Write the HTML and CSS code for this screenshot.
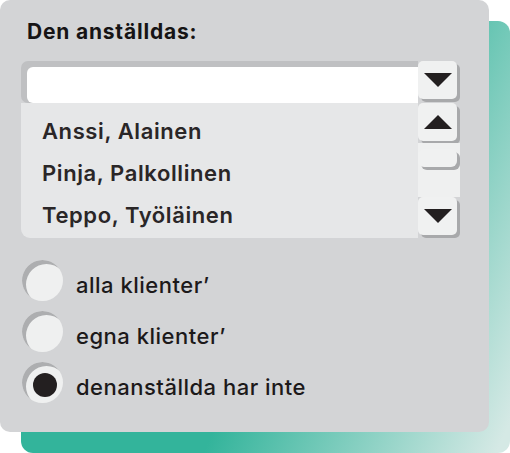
FILE: index.html
```html
<!DOCTYPE html>
<html lang="sv">
<head>
<meta charset="utf-8">
<link rel="stylesheet" href="styles.css">
</head>
<body>
<div class="stage">
  <div class="backdrop"></div>
  <div class="card">
    <div class="title">Den anställdas:</div>
    <div class="combo">
      <div class="input"><div class="field"></div></div>
      <div class="btn btn-top"><span class="tri down"></span></div>
      <div class="list">
        <div class="item">Anssi, Alainen</div>
        <div class="item">Pinja, Palkollinen</div>
        <div class="item">Teppo, Työläinen</div>
      </div>
      <div class="scroll">
        <div class="btn"><span class="tri up"></span></div>
        <div class="track"><div class="thumb"></div></div>
        <div class="btn"><span class="tri down"></span></div>
      </div>
    </div>
    <div class="radios">
      <div class="radio"><span class="circle"></span><span class="label">alla klienter’</span></div>
      <div class="radio"><span class="circle"></span><span class="label">egna klienter’</span></div>
      <div class="radio"><span class="circle checked"><span class="dot"></span></span><span class="label">denanställda har inte</span></div>
    </div>
  </div>
</div>
</body>
</html>
```
FILE: styles.css
```css
html, body {
  margin: 0;
  padding: 0;
  background: #ffffff;
}
body {
  width: 510px;
  height: 453px;
  overflow: hidden;
  font-family: Inter, "Noto Sans", sans-serif;
  color: #231f20;
}
.stage {
  display: grid;
  width: 510px;
  height: 453px;
}
.backdrop, .card {
  grid-area: 1 / 1;
}
.backdrop {
  margin: 21px 0 0 21px;
  width: 489px;
  height: 432px;
  border-radius: 12px;
  background: linear-gradient(114deg, #33b49b 55%, #d5e9e5 98%);
}
.card {
  width: 489px;
  height: 432px;
  box-sizing: border-box;
  border-radius: 10px;
  background: #d3d4d6;
  padding: 19px 0 0 21px;
  display: flex;
  flex-direction: column;
  position: relative;
}
.title {
  font-size: 21px;
  line-height: 25px;
  font-weight: 700;
  color: #161415;
  padding-left: 6px;
  letter-spacing: 0.8px;
}
.combo {
  margin-top: 17px;
  width: 439px;
  display: grid;
  grid-template-columns: 397px 42px;
  grid-template-rows: 42px 135px;
}
.input {
  background: #bfc0c2;
  border-radius: 7px 0 0 7px;
  padding: 6px 0 0 6px;
  display: flex;
}
.field {
  flex: 1;
  background: #ffffff;
  border-radius: 6px 0 0 6px;
}
.btn {
  width: 39px;
  height: 38px;
  border-radius: 5px;
  background: #f0f1f1;
  box-shadow: 3px 3px 0 #a8a9ab;
  display: flex;
  align-items: center;
  justify-content: center;
}
.tri {
  width: 0;
  height: 0;
  border-left: 14px solid transparent;
  border-right: 14px solid transparent;
}
.tri.down {
  border-top: 14px solid #231f20;
}
.tri.up {
  border-bottom: 14px solid #231f20;
}
.list {
  background: #e6e7e8;
  border-radius: 0 0 0 9px;
  padding-top: 7px;
  box-sizing: border-box;
}
.item {
  padding-left: 21px;
  font-size: 22px;
  line-height: 42px;
  font-weight: 600;
  letter-spacing: 0.6px;
  color: #2a2627;
}
.scroll {
  display: flex;
  flex-direction: column;
}
.track {
  height: 54px;
  background: #eff0f0;
  padding-top: 6px;
  box-sizing: border-box;
}
.thumb {
  width: 39px;
  height: 18px;
  border-radius: 6px;
  background: #f0f1f1;
  box-shadow: 3px 3px 0 #a8a9ab;
}
.scroll .btn:first-child {
  margin-bottom: 2px;
}
.radios {
  margin-top: 22px;
  display: flex;
  flex-direction: column;
  gap: 10px;
  padding-left: 1px;
}
.radio {
  display: flex;
  align-items: center;
  height: 41px;
}
.circle {
  flex: none;
  width: 41px;
  height: 41px;
  border-radius: 50%;
  background: #eff0f0;
  box-shadow: inset 4px 4px 0 #adaeb0;
  display: flex;
  align-items: center;
  justify-content: center;
  box-sizing: border-box;
  padding: 4px 0 0 4px;
}
.dot {
  width: 24px;
  height: 24px;
  border-radius: 50%;
  background: #231f20;
}
.label {
  margin-left: 13px;
  padding-top: 9px;
  font-size: 22px;
  font-weight: 500;
  letter-spacing: 0.5px;
  color: #1c191a;
}
```
